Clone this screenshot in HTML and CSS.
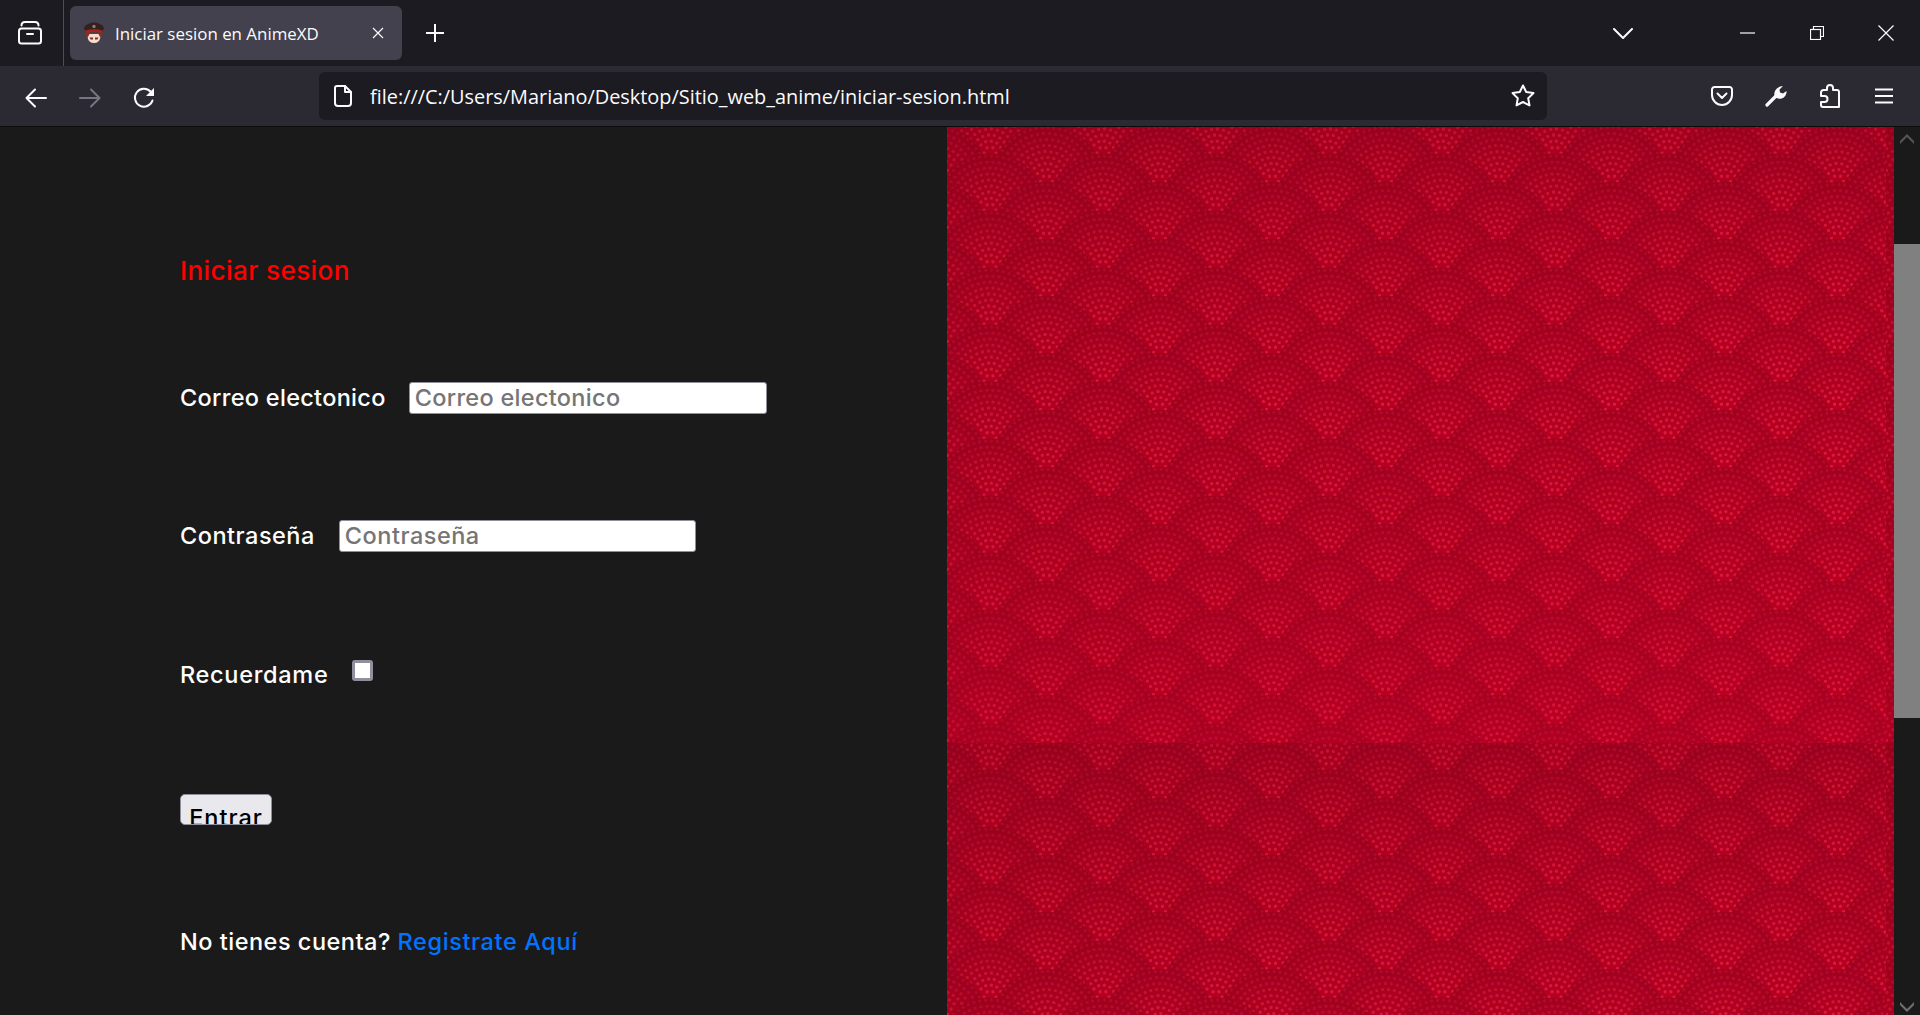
FILE: index.html
```html
<!DOCTYPE html>
<html lang="es">
<head>
<meta charset="utf-8">
<title>Iniciar sesion en AnimeXD</title>
<link rel="stylesheet" href="styles.css">
</head>
<body>
<header class="tabstrip">
  <div class="view-slot">
    <svg class="ic" width="24" height="24" viewBox="0 0 24 24"><rect x="1" y="7.500" width="22" height="15" rx="2.500"/><path d="M3.500 4.500Q3.500 1 7 1h10q3.500 0 3.500 3.500"/><path d="M9 13h6"/></svg>
  </div>
  <div class="tab">
    <svg class="favicon" width="22" height="22" viewBox="0 0 22 22">
      <path d="M4.500 11h13v4q-1 6-6.500 6t-6.500-6z" fill="#f6ded0"/>
      <path d="M2.500 11h17l-.5 5-2-1-1.500-3h-9L5 15l-2 1z" fill="#7d3423"/>
      <path d="M1 5.500Q5 .5 11 .5t10 5q-.5 3.500-2.500 4.500h-15Q1.500 9 1 5.500z" fill="#35201f"/>
      <path d="M2.500 8.500q8.500-2.500 17 0l-.5 2.500q-8-1.500-16 0z" fill="#a3261f"/>
      <circle cx="11" cy="4.500" r="1.700" fill="#85807f"/>
      <path d="M6.500 15.500h3.500v2H7.500zM12 15.500h3.500l-1 2H12z" fill="#8e2a20"/>
    </svg>
    <span class="tab-title">Iniciar sesion en AnimeXD</span>
    <svg class="ic thin" width="12" height="12" viewBox="0 0 12 12"><path d="M1 1l10 10M11 1L1 11"/></svg>
  </div>
  <div class="newtab">
    <svg class="ic" width="18" height="18" viewBox="0 0 18 18"><path d="M9 0v18M0 9h18"/></svg>
  </div>
  <div class="strip-space"></div>
  <div class="listall">
    <svg class="ic" width="20" height="11" viewBox="0 0 20 11"><path d="M1 1l9 9 9-9"/></svg>
  </div>
  <div class="winbtn">
    <svg class="ic thin" width="15" height="2" viewBox="0 0 15 2"><path d="M0 1h15"/></svg>
  </div>
  <div class="winbtn">
    <svg class="ic thin" width="14" height="14" viewBox="0 0 14 14"><rect x=".5" y="3.500" width="10" height="10"/><path d="M3.500 3V.5h10v10H11"/></svg>
  </div>
  <div class="winbtn">
    <svg class="ic thin" width="16" height="16" viewBox="0 0 16 16"><path d="M.5.5l15 15M15.500.5l-15 15"/></svg>
  </div>
</header>

<nav class="toolbar">
  <div class="tbtn low"><svg class="ic" width="22" height="20" viewBox="0 0 22 20"><path d="M21 10H2M10 1.500L1.500 10l8.500 8.500"/></svg></div>
  <div class="tbtn low dim"><svg class="ic" width="22" height="20" viewBox="0 0 22 20"><path d="M1 10h19M12 1.500l8.500 8.500-8.500 8.500"/></svg></div>
  <div class="tbtn low"><svg class="ic" width="22" height="22" viewBox="0 0 22 22"><path d="M19.500 13.500A9 9 0 1 1 17.500 4.500"/><path class="solid" d="M21 1v8h-8z"/></svg></div>
  <div class="urlbar">
    <svg class="ic" width="18" height="22" viewBox="0 0 18 22"><path d="M3 1h8l6 6v11a3 3 0 0 1-3 3H4a3 3 0 0 1-3-3V3a2 2 0 0 1 2-2z"/><path d="M11 1v6h6"/></svg>
    <span class="url">file:///C:/Users/Mariano/Desktop/Sitio_web_anime/iniciar-sesion.html</span>
    <svg class="ic star" width="24" height="24" viewBox="0 0 24 24"><path d="M12 1.500l3.200 6.550 7.300 1.050-5.300 5.100 1.300 7.200L12 18l-6.500 3.400 1.300-7.200-5.300-5.100 7.300-1.050z"/></svg>
  </div>
  <div class="tbtn first-right"><svg class="ic" width="22" height="20" viewBox="0 0 22 20"><path d="M1 3.500A2.500 2.500 0 0 1 3.500 1h15A2.500 2.500 0 0 1 21 3.500V9a10 10 0 0 1-20 0z"/><path d="M6.500 7.500L11 12l4.500-4.500"/></svg></div>
  <div class="tbtn"><svg class="ic" width="22" height="22" viewBox="0 0 22 22"><path d="M2 20l9-9" stroke-width="3.200"/><path class="solid" d="M9.500 11C8.500 6 12 1.500 18 1l-3.500 3.500.5 3 3 1L21.500 6c.5 5.500-5 9.500-10 7z"/></svg></div>
  <div class="tbtn"><svg class="ic" width="20" height="24" viewBox="0 0 20 24"><path d="M7 6V4a3 3 0 0 1 6 0v2h3.500A2 2 0 0 1 19 8v15H3a2 2 0 0 1-2-2v-3h3.500a3 3 0 0 0 0-6H1V8.500A2.500 2.500 0 0 1 3.500 6z"/></svg></div>
  <div class="tbtn"><svg class="ic" width="18" height="16" viewBox="0 0 18 16"><path d="M0 1.500h18M0 8h18M0 14.500h18"/></svg></div>
</nav>

<main class="viewport">
  <section class="login">
    <h1 class="title">Iniciar sesion</h1>
    <div class="row row-mail">
      <label class="lbl" for="mail">Correo electonico</label>
      <input class="field field-mail" id="mail" type="text" placeholder="Correo electonico">
    </div>
    <div class="row row-pass">
      <label class="lbl" for="pass">Contraseña</label>
      <input class="field field-pass" id="pass" type="password" placeholder="Contraseña">
    </div>
    <div class="row row-check">
      <label class="lbl" for="rem">Recuerdame</label>
      <input class="check" id="rem" type="checkbox">
    </div>
    <button class="enter" type="button">Entrar</button>
    <p class="row row-signup"><span class="lbl">No tienes cuenta?&nbsp;</span><a class="lbl signup" href="#">Registrate Aquí</a></p>
  </section>

  <section class="art">
    <svg class="art-svg" width="947" height="888" xmlns="http://www.w3.org/2000/svg" xmlns:xlink="http://www.w3.org/1999/xlink">
      <defs>
        <radialGradient id="scaleBg" gradientUnits="objectBoundingBox" cx=".5" cy=".5" r=".5">
          <stop offset="0" stop-color="#b60023"/>
          <stop offset=".6" stop-color="#aa0021"/>
          <stop offset="1" stop-color="#9e001f"/>
        </radialGradient>
        <g id="scale" fill="none" stroke-linecap="round" stroke-width="3.400" stroke-dasharray="0 1">
          <circle r="56.500" fill="url(#scaleBg)" stroke="none"/>
          <circle r="6" pathLength="6" stroke="#e21d3b"/>
          <circle r="12" pathLength="13" stroke="#df1c39"/>
          <circle r="18" pathLength="19" stroke="#da1a36"/>
          <circle r="24" pathLength="25" stroke="#d41833"/>
          <circle r="30" pathLength="31" stroke="#ce1631"/>
          <circle r="36" pathLength="38" stroke="#c6142e"/>
          <circle r="42" pathLength="44" stroke="#be112c"/>
          <circle r="48" pathLength="50" stroke="#b60f2a"/>
          <circle r="54" pathLength="57" stroke="#ae0d28"/>
        </g>
        <pattern id="scales" width="113" height="57" patternUnits="userSpaceOnUse" patternTransform="translate(43 26)">
          <use xlink:href="#scale" x="56.500" y="-28.500"/>
          <use xlink:href="#scale" x="0" y="0"/><use xlink:href="#scale" x="113" y="0"/>
          <use xlink:href="#scale" x="56.500" y="28.500"/>
          <use xlink:href="#scale" x="0" y="57"/><use xlink:href="#scale" x="113" y="57"/>
          <use xlink:href="#scale" x="56.500" y="85.500"/>
          <use xlink:href="#scale" x="0" y="114"/><use xlink:href="#scale" x="113" y="114"/>
        </pattern>
        <linearGradient id="shade" x1="0" y1="0" x2="0" y2="1">
          <stop offset="0" stop-color="#7a0018" stop-opacity=".2"/>
          <stop offset=".45" stop-color="#b00020" stop-opacity=".05"/>
          <stop offset="1" stop-color="#c8002a" stop-opacity=".22"/>
        </linearGradient>
        <linearGradient id="shadeX" x1="0" y1="0" x2="1" y2="0">
          <stop offset="0" stop-color="#8a0018" stop-opacity=".12"/>
          <stop offset="1" stop-color="#e00030" stop-opacity=".04"/>
        </linearGradient>
        <filter id="soft" x="0" y="0" width="100%" height="100%"><feGaussianBlur stdDeviation=".7"/></filter>
        <pattern id="tile" width="939" height="616" patternUnits="userSpaceOnUse">
          <rect width="939" height="616" fill="#aa0020"/>
          <rect width="939" height="616" fill="url(#scales)" filter="url(#soft)"/>
          <rect width="939" height="616" fill="url(#shadeX)"/>
          <rect width="939" height="616" fill="url(#shade)"/>
        </pattern>
      </defs>
      <rect width="947" height="888" fill="url(#tile)"/>
    </svg>
  </section>

  <aside class="scrollbar">
    <svg class="sb-arrow up" width="14" height="10" viewBox="0 0 14 10"><path d="M0 7l7-7 7 7v3L7 3 0 10z"/></svg>
    <div class="sb-thumb"></div>
    <svg class="sb-arrow down" width="14" height="10" viewBox="0 0 14 10"><path d="M0 3l7 7 7-7V0L7 7 0 0z"/></svg>
  </aside>
</main>
</body>
</html>
```

FILE: styles.css
```css
* { box-sizing: border-box; }
html, body { margin: 0; height: 100%; overflow: hidden; }
body {
  display: flex;
  flex-direction: column;
  background: #1a1a1a;
  font-family: Inter, "Liberation Sans", sans-serif;
}

/* icons */
.ic { fill: none; stroke: #fbfbfe; stroke-width: 2; stroke-linecap: round; stroke-linejoin: round; display: block; flex: none; }
.ic.thin { stroke-width: 1.2; stroke-linecap: butt; stroke-linejoin: miter; }
.ic .solid { fill: #fbfbfe; stroke: none; }

/* tab strip */
.tabstrip { display: flex; align-items: center; height: 66px; background: #1c1b22; flex: none; }
.view-slot { width: 64px; height: 66px; border-right: 1px solid #4e4d57; display: flex; align-items: center; padding-left: 18px; }
.tab { width: 332px; height: 54px; margin-left: 6px; background: #42414d; border-radius: 6px; display: flex; align-items: center; padding: 0 18px 0 13px; color: #fbfbfe; }
.favicon { flex: none; }
.tab-title { flex: 1; margin-left: 10px; font: 16.900px "Open Sans", sans-serif; white-space: nowrap; }
.newtab { width: 46px; margin-left: 10px; display: flex; justify-content: center; }
.strip-space { flex: 1; }
.listall { width: 60px; margin-right: 60px; display: flex; justify-content: center; }
.winbtn { width: 69px; display: flex; justify-content: center; }

/* toolbar */
.toolbar { display: flex; align-items: center; height: 61px; background: #2b2a33; padding: 0 9px; border-bottom: 1px solid #0c0c0d; flex: none; }
.tbtn { width: 54px; display: flex; justify-content: center; }
.tbtn.low { padding-top: 3px; }
.tbtn.dim .ic { stroke: #777680; }
.urlbar { width: 1228px; height: 48px; margin-left: 148px; background: #1c1b22; border-radius: 6px; display: flex; align-items: center; padding: 0 12px 0 15px; }
.url { flex: 1; margin-left: 18px; color: #fbfbfe; font: 19.900px "Open Sans", sans-serif; white-space: nowrap; }
.first-right { margin-left: 148px; }

/* page */
.viewport { flex: 1; display: flex; min-height: 0; }
.login { width: 947px; flex: none; background: #1a1a1a; padding: 128px 0 0 180px; color: #fff; font-size: 23.500px; font-weight: 500; letter-spacing: .35px; }
.title { margin: 0; height: 32px; line-height: 32px; color: #f00; font-size: 26.200px; font-weight: 500; }
.row { display: flex; align-items: center; height: 32px; margin: 0; gap: 24px; }
.row-mail { margin-top: 95px; gap: 23px; letter-spacing: .3px; }
.row-pass { margin-top: 106px; gap: 24px; letter-spacing: .5px; }
.row-check { margin-top: 107px; gap: 24px; letter-spacing: .7px; }
.row-signup { margin-top: 101px; gap: 0; letter-spacing: .5px; }
.lbl { white-space: nowrap; padding-bottom: 2px; }
.field { height: 32px; background: #fff; border: 1px solid #8f8f9d; border-radius: 3px; padding: 0 5px 2px; font: inherit; letter-spacing: inherit; color: #000; }
.field::placeholder { color: #757575; opacity: 1; }
.field-mail { width: 358px; }
.field-pass { width: 357px; }
.check { appearance: none; width: 21px; height: 21px; margin: 0 0 10px; background: #fff; border: 3px solid #8f8f9d; border-radius: 3px; }
.enter { display: block; width: 92px; height: 31px; margin: 103px 0 0; padding: 10px 0 0; background: #e9e9ed; border: 1px solid #8f8f9d; border-radius: 5px; overflow: hidden; color: #000; font: inherit; letter-spacing: 1px; line-height: 26px; }
.signup { color: #0073ff; text-decoration: none; letter-spacing: .6px; }

/* art */
.art { width: 947px; flex: none; overflow: hidden; }
.art-svg { display: block; }

/* scrollbar */
.scrollbar { flex: 1; background: #1a1a1a; display: flex; flex-direction: column; align-items: center; }
.sb-arrow { flex: none; display: block; }
.sb-arrow.up { fill: #555; margin-top: 7px; }
.sb-arrow.down { fill: #6f6f6f; margin-top: auto; margin-bottom: 3px; }
.sb-thumb { width: 100%; height: 474px; margin-top: 100px; background: #808080; }
```
